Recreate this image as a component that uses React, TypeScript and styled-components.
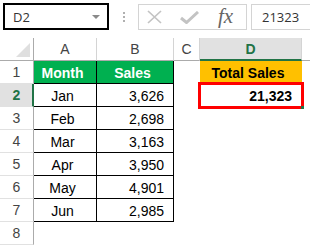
import React from "react";
import styled, { createGlobalStyle, css } from "styled-components";

const GlobalStyle = createGlobalStyle`
  html, body {
    margin: 0;
    padding: 0;
    background: #ffffff;
  }
  body {
    font-family: "Liberation Sans", Arial, sans-serif;
  }
`;

const Window = styled.div`
  width: 310px;
  height: 245px;
  overflow: hidden;
  background: #ffffff;
  display: flex;
  flex-direction: column;
`;

const FormulaBar = styled.div`
  height: 40px;
  display: flex;
  align-items: flex-start;
  padding: 3px 0 0 3px;
  box-sizing: border-box;
  font-family: "Open Sans", "Liberation Sans", sans-serif;
  font-size: 13px;
  color: #333333;
`;

const NameBox = styled.div`
  width: 106px;
  height: 27px;
  box-sizing: border-box;
  border: 2px solid #000000;
  display: flex;
  align-items: center;
  justify-content: space-between;
  padding: 0 7px 0 8px;
`;

const Caret = styled.span`
  width: 0;
  height: 0;
  border-left: 4px solid transparent;
  border-right: 4px solid transparent;
  border-top: 4px solid #8a8a8a;
`;

const Grip = styled.div`
  width: 29px;
  height: 27px;
  display: flex;
  flex-direction: column;
  align-items: center;
  justify-content: center;
  gap: 2px;
  span {
    width: 2px;
    height: 2px;
    background: #b0b0b0;
  }
`;

const IconBox = styled.div`
  width: 109px;
  height: 26px;
  margin-top: 1px;
  box-sizing: border-box;
  border: 1px solid #d4d4d4;
  display: flex;
  align-items: center;
  padding-left: 8px;
  gap: 18px;
`;

const Fx = styled.span`
  font-family: "Liberation Serif", "Times New Roman", serif;
  font-style: italic;
  font-size: 21px;
  color: #666666;
  margin-left: 1px;
  margin-top: -1px;
`;

const ValueBox = styled.div`
  flex: 1;
  height: 26px;
  margin: 1px 0 0 4px;
  box-sizing: border-box;
  border: 1px solid #d4d4d4;
  border-right: none;
  display: flex;
  align-items: center;
  padding-left: 10px;
`;

const Sheet = styled.div`
  display: grid;
  grid-template-columns: 34px 63px 77px 26px 102px 1fr;
  grid-auto-rows: 23px;
  font-size: 14px;
  color: #000000;
`;

type CellProps = {
  $align?: "left" | "center" | "right";
  $fill?: string;
  $ink?: string;
  $bold?: boolean;
  $boxed?: boolean;
};

const Cell = styled.div<CellProps>`
  box-sizing: border-box;
  border-right: 1px solid ${p => (p.$boxed ? "#000000" : "transparent")};
  border-bottom: 1px solid ${p => (p.$boxed ? "#000000" : "transparent")};
  background: ${p => p.$fill || "transparent"};
  color: ${p => p.$ink || "#000000"};
  font-weight: ${p => (p.$bold ? 700 : 400)};
  display: flex;
  align-items: center;
  justify-content: ${p =>
    p.$align === "center" ? "center" : p.$align === "right" ? "flex-end" : "flex-start"};
  padding: 1px 9px 0 4px;
  white-space: nowrap;
`;

const Selected = styled(Cell)`
  position: relative;
  outline: 3px solid #ff0000;
  outline-offset: -1px;
  z-index: 1;
  &::after {
    content: "";
    position: absolute;
    right: -3px;
    bottom: -3px;
    width: 3px;
    height: 3px;
    background: #217346;
  }
`;

const headerBase = css`
  box-sizing: border-box;
  display: flex;
  align-items: center;
  justify-content: center;
  color: #444444;
  font-size: 14px;
  background: #ffffff;
`;

const ColHead = styled.div<{ $active?: boolean }>`
  ${headerBase};
  border-right: 1px solid #d4d4d4;
  border-bottom: ${p => (p.$active ? "2px solid #217346" : "1px solid #ababab")};
  ${p =>
    p.$active &&
    css`
      background: #e1e1e1;
      color: #217346;
      font-weight: 700;
      padding-top: 1px;
    `}
`;

const Corner = styled.div`
  ${headerBase};
  position: relative;
  border-right: 1px solid #ababab;
  border-bottom: 1px solid #ababab;
  &::after {
    content: "";
    position: absolute;
    right: 3px;
    bottom: 3px;
    border-left: 14px solid transparent;
    border-bottom: 14px solid #dfdfdf;
  }
`;

const RowHead = styled.div<{ $active?: boolean }>`
  ${headerBase};
  border-bottom: 1px solid #e1e1e1;
  border-right: ${p => (p.$active ? "2px solid #217346" : "1px solid #ababab")};
  ${p =>
    p.$active &&
    css`
      background: #e1e1e1;
      color: #217346;
      font-weight: 700;
      padding-left: 1px;
    `}
`;

const sales = [
  { month: "Jan", value: "3,626" },
  { month: "Feb", value: "2,698" },
  { month: "Mar", value: "3,163" },
  { month: "Apr", value: "3,950" },
  { month: "May", value: "4,901" },
  { month: "Jun", value: "2,985" }
];

const CancelIcon = () => (
  <svg width="15" height="14" viewBox="0 0 15 14">
    <path d="M1 1 L14 13 M14 1 L1 13" stroke="#c3c3c3" strokeWidth="1.7" fill="none" />
  </svg>
);

const EnterIcon = () => (
  <svg width="19" height="13" viewBox="0 0 19 13">
    <path d="M1 7 L6.5 11.5 L18 1" stroke="#c3c3c3" strokeWidth="3" fill="none" />
  </svg>
);

const App = () => {
  return (
    <Window>
      <GlobalStyle />
      <FormulaBar>
        <NameBox>
          <span>D2</span>
          <Caret />
        </NameBox>
        <Grip>
          <span />
          <span />
          <span />
        </Grip>
        <IconBox>
          <CancelIcon />
          <EnterIcon />
          <Fx>fx</Fx>
        </IconBox>
        <ValueBox>21323</ValueBox>
      </FormulaBar>

      <Sheet>
        <Corner />
        <ColHead>A</ColHead>
        <ColHead>B</ColHead>
        <ColHead>C</ColHead>
        <ColHead $active>D</ColHead>
        <ColHead />

        <RowHead>1</RowHead>
        <Cell $boxed $bold $align="center" $fill="#00b050" $ink="#ffffff">
          Month
        </Cell>
        <Cell $boxed $bold $align="center" $fill="#00b050" $ink="#ffffff">
          Sales
        </Cell>
        <Cell />
        <Cell $bold $align="center" $fill="#ffc000">
          Total Sales
        </Cell>
        <Cell />

        {sales.map((row, i) => (
          <React.Fragment key={row.month}>
            <RowHead $active={i === 0}>{i + 2}</RowHead>
            <Cell $boxed $align="center">
              {row.month}
            </Cell>
            <Cell $boxed $align="right">
              {row.value}
            </Cell>
            <Cell />
            {i === 0 ? (
              <Selected $bold $align="right">
                21,323
              </Selected>
            ) : (
              <Cell />
            )}
            <Cell />
          </React.Fragment>
        ))}

        <RowHead>8</RowHead>
        <Cell />
        <Cell />
        <Cell />
        <Cell />
        <Cell />
      </Sheet>
    </Window>
  );
};

export default App;
